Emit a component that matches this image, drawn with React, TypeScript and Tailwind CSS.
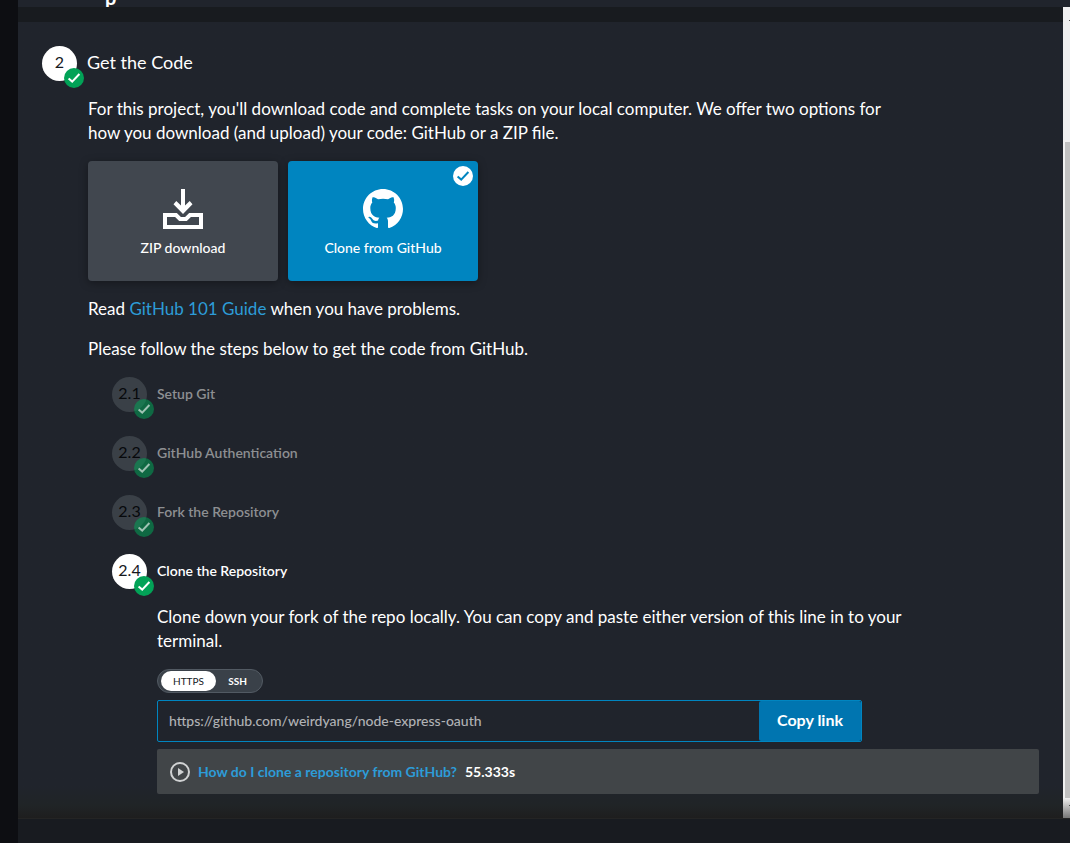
import { useState } from "react";

type StepBadgeProps = { label: string };

function Check({ className }: { className: string }) {
  return (
    <svg viewBox="0 0 20 20" className={className} fill="none" stroke="currentColor" strokeWidth="2" aria-hidden="true">
      <path d="M4.6 10.4 8.2 13.6 15.4 6" />
    </svg>
  );
}

function StepBadge({ label }: StepBadgeProps) {
  return (
    <span className="relative flex size-[35px] shrink-0 items-center justify-center rounded-full bg-white pb-1 text-base leading-6 text-[#15181d]">
      {label}
      <span className="absolute -right-[7px] -bottom-[7px] size-5 rounded-full bg-[#02a257] text-white">
        <Check className="size-5" />
      </span>
    </span>
  );
}

function DoneStepBadge({ label }: StepBadgeProps) {
  return (
    <span className="relative flex size-[35px] shrink-0 items-center justify-center rounded-full bg-[#3a4047] pb-1 text-base leading-6 text-[#07090c]">
      {label}
      <span className="absolute -right-[7px] -bottom-[7px] size-5 rounded-full bg-[#02a257]/55 text-white/60">
        <Check className="size-5" />
      </span>
    </span>
  );
}

function DownloadIcon() {
  return (
    <svg viewBox="0 0 40 40" className="size-10" aria-hidden="true">
      <path fill="currentColor" d="M18 0h4v16.5l4.7-4.5 2.8 3.2L20 25l-9.5-9.8 2.8-3.2 4.7 4.5z" />
      <path fill="none" stroke="currentColor" strokeWidth="4" d="M2 26h11l4 4h6l4-4h11v12H2z" />
    </svg>
  );
}

function GitHubIcon() {
  return (
    <svg viewBox="0 0 16 16" className="size-10" fill="currentColor" aria-hidden="true">
      <path d="M8 0C3.58 0 0 3.58 0 8c0 3.54 2.29 6.53 5.47 7.59.4.07.55-.17.55-.38 0-.19-.01-.82-.01-1.49-2.01.37-2.53-.49-2.69-.94-.09-.23-.48-.94-.82-1.13-.28-.15-.68-.52-.01-.53.63-.01 1.08.58 1.23.82.72 1.21 1.87.87 2.33.66.07-.52.28-.87.51-1.07-1.78-.2-3.64-.89-3.64-3.95 0-.87.31-1.59.82-2.15-.08-.2-.36-1.02.08-2.12 0 0 .67-.21 2.2.82.64-.18 1.32-.27 2-.27.68 0 1.36.09 2 .27 1.53-1.04 2.2-.82 2.2-.82.44 1.1.16 1.92.08 2.12.51.56.82 1.27.82 2.15 0 3.07-1.87 3.75-3.65 3.95.29.25.54.73.54 1.48 0 1.07-.01 1.93-.01 2.2 0 .21.15.46.55.38A8.013 8.013 0 0 0 16 8c0-4.42-3.58-8-8-8z" />
    </svg>
  );
}

function PlayIcon() {
  return (
    <svg viewBox="0 0 20 20" className="size-5 shrink-0 text-[#d0d2d3]" aria-hidden="true">
      <circle cx="10" cy="10" r="9" fill="none" stroke="currentColor" strokeWidth="2" />
      <path d="M8 6v8l6-4z" fill="currentColor" />
    </svg>
  );
}

const finishedSteps = [
  { label: "2.1", title: "Setup Git" },
  { label: "2.2", title: "GitHub Authentication" },
  { label: "2.3", title: "Fork the Repository" },
];

export default function App() {
  const [url, setUrl] = useState("https://github.com/weirdyang/node-express-oauth");

  return (
    <div className="flex min-h-screen bg-[#20242c] font-['Lato','Open_Sans',sans-serif] text-white">
      <div className="w-[18px] shrink-0 bg-[#0d0e12]" />
      <div className="flex min-w-0 flex-1 flex-col">
        <div className="flex h-[7px] shrink-0 items-end overflow-hidden pb-1 pl-[87px] text-xl leading-3 font-bold">
          <span>p</span>
        </div>
        <div className="flex">
          <main className="min-w-0 flex-1">
            <div className="h-[15px] bg-[#181b1f]" />
            <section className="bg-linear-to-t from-[#1e1e1e] via-[#202426] via-[12px] to-[#20242c] to-[32px] p-6">
              <header className="flex items-center gap-[10px]">
                <StepBadge label="2" />
                <h2 className="pb-1 text-lg leading-6">Get the Code</h2>
              </header>

              <div className="pt-4 pl-[46px] text-[17px] leading-6">
                <p className="max-w-[800px]">
                  For this project, you&apos;ll download code and complete tasks on your local computer. We offer two options for
                  how you download (and upload) your code: GitHub or a ZIP file.
                </p>

                <div className="flex gap-[10px] pt-4 pb-4 text-sm font-medium">
                  <button
                    type="button"
                    className="flex h-[120px] w-[190px] flex-col items-center justify-center gap-[9px] rounded bg-[#41474f] pt-1 shadow-[0_2px_8px_rgba(0,0,0,0.35)]"
                  >
                    <DownloadIcon />
                    <span>ZIP download</span>
                  </button>
                  <button
                    type="button"
                    aria-pressed="true"
                    className="relative flex h-[120px] w-[190px] flex-col items-center justify-center gap-[9px] rounded bg-[#0085c0] pt-1 shadow-[0_2px_8px_rgba(0,0,0,0.35)]"
                  >
                    <GitHubIcon />
                    <span>Clone from GitHub</span>
                    <span className="absolute top-[5px] right-[5px] size-5 rounded-full bg-white text-[#0085c0]">
                      <Check className="size-5" />
                    </span>
                  </button>
                </div>

                <p>
                  Read <a href="#guide" className="text-[#2d9cd8]">GitHub 101 Guide</a> when you have problems.
                </p>
                <p className="pt-4">Please follow the steps below to get the code from GitHub.</p>

                <ol className="flex flex-col gap-6 pt-4 pl-6">
                  {finishedSteps.map((step) => (
                    <li key={step.label} className="flex items-center gap-[10px]">
                      <DoneStepBadge label={step.label} />
                      <h3 className="pb-0.5 text-sm leading-6 font-semibold text-[#8d8f92]">{step.title}</h3>
                    </li>
                  ))}
                  <li>
                    <div className="flex items-center gap-[10px]">
                      <StepBadge label="2.4" />
                      <h3 className="pb-0.5 text-sm leading-6 font-semibold">Clone the Repository</h3>
                    </div>
                    <div className="pt-4 pl-[45px]">
                      <p className="max-w-[760px]">
                        Clone down your fork of the repo locally. You can copy and paste either version of this line in to your
                        terminal.
                      </p>

                      <div className="mt-4 flex h-6 w-[106px] items-center rounded-full border border-[#525a63] bg-[#3a4149] px-[3px] text-[10px] leading-5">
                        <button type="button" aria-pressed="true" className="h-5 w-[55px] rounded-full bg-white text-[#15181d]">
                          HTTPS
                        </button>
                        <button type="button" aria-pressed="false" className="h-5 w-[43px] rounded-full font-bold">
                          SSH
                        </button>
                      </div>

                      <div className="mt-[7px] flex h-[42px] max-w-[705px] rounded-xs border border-[#0085c0]">
                        <input
                          type="text"
                          aria-label="Repository URL"
                          value={url}
                          onChange={(event) => setUrl(event.target.value)}
                          className="min-w-0 flex-1 bg-transparent pl-[11px] text-sm font-medium text-[#b0b2b5] outline-none"
                        />
                        <button type="button" className="w-[102px] rounded-xs bg-[#0075b0] pb-0.5 text-base font-bold">
                          Copy link
                        </button>
                      </div>

                      <div className="mt-[7px] flex h-[45px] items-center gap-2 rounded-xs bg-[#414548] px-[13px] text-sm font-bold">
                        <PlayIcon />
                        <a href="#clone-help" className="text-[#2d9cd8]">How do I clone a repository from GitHub?</a>
                        <span>55.333s</span>
                      </div>
                    </div>
                  </li>
                </ol>
              </div>
            </section>
          </main>
          <div className="flex w-[7px] shrink-0 flex-col bg-linear-to-t from-[#777777] to-[#f0f0f0] to-[20px] pl-[2px]">
            <div className="flex h-[135px] items-start justify-end pt-[13px]">
              <span className="h-px w-px bg-[#505050]" />
            </div>
            <div className="flex-1 bg-[#c1c1c1]" />
            <div className="flex h-[20px] items-start justify-end pt-[7px]">
              <span className="h-px w-px bg-[#505050]" />
            </div>
          </div>
        </div>
        <footer className="flex-1 border-t border-[#242424] bg-[#181b20]" />
      </div>
    </div>
  );
}
